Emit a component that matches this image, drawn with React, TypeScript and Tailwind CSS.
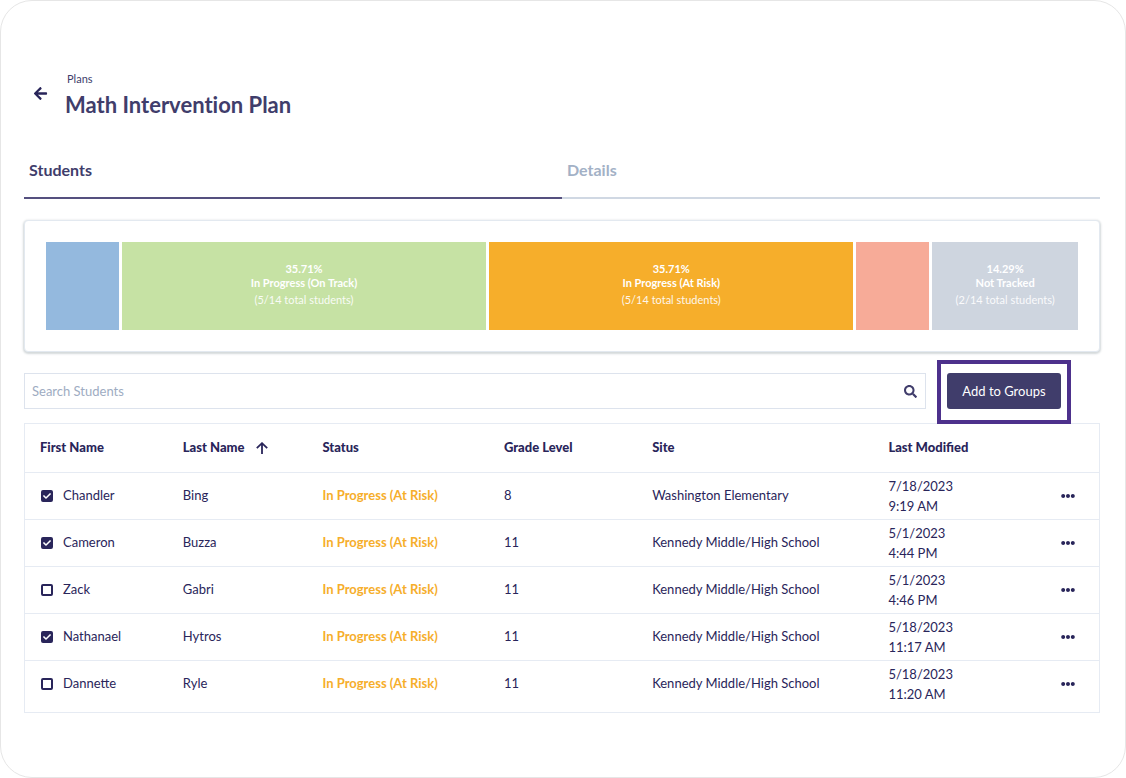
import React, { useState } from 'react';
import { FaArrowLeft, FaSearch, FaEllipsisH, FaCheck } from 'react-icons/fa';

interface Student {
  id: number;
  firstName: string;
  lastName: string;
  status: string;
  grade: string;
  site: string;
  date: string;
  time: string;
}

interface Segment {
  id: string;
  color: string;
  count: number;
  percent?: string;
  label?: string;
}

const TOTAL_STUDENTS = 14;

const segments: Segment[] = [
  { id: 'achieved', color: 'bg-[#94b9de]', count: 1 },
  { id: 'on-track', color: 'bg-[#c6e2a4]', count: 5, percent: '35.71%', label: 'In Progress (On Track)' },
  { id: 'at-risk', color: 'bg-[#f6ae2b]', count: 5, percent: '35.71%', label: 'In Progress (At Risk)' },
  { id: 'not-achieved', color: 'bg-[#f7ab98]', count: 1 },
  { id: 'not-tracked', color: 'bg-[#ced5df]', count: 2, percent: '14.29%', label: 'Not Tracked' },
];

const students: Student[] = [
  { id: 1, firstName: 'Chandler', lastName: 'Bing', status: 'In Progress (At Risk)', grade: '8', site: 'Washington Elementary', date: '7/18/2023', time: '9:19 AM' },
  { id: 2, firstName: 'Cameron', lastName: 'Buzza', status: 'In Progress (At Risk)', grade: '11', site: 'Kennedy Middle/High School', date: '5/1/2023', time: '4:44 PM' },
  { id: 3, firstName: 'Zack', lastName: 'Gabri', status: 'In Progress (At Risk)', grade: '11', site: 'Kennedy Middle/High School', date: '5/1/2023', time: '4:46 PM' },
  { id: 4, firstName: 'Nathanael', lastName: 'Hytros', status: 'In Progress (At Risk)', grade: '11', site: 'Kennedy Middle/High School', date: '5/18/2023', time: '11:17 AM' },
  { id: 5, firstName: 'Dannette', lastName: 'Ryle', status: 'In Progress (At Risk)', grade: '11', site: 'Kennedy Middle/High School', date: '5/18/2023', time: '11:20 AM' },
];

const ProgressBar: React.FC = () => (
  <div className="mt-[21px] flex gap-[3px] rounded border border-[#e3e9f0] bg-white p-[21px] shadow-[0_1px_2px_1px_rgba(60,80,90,0.22)]">
    {segments.map((segment) => (
      <div
        key={segment.id}
        className={`flex h-[88px] min-w-0 basis-0 flex-col items-center justify-center pb-1 text-center text-[11px] leading-[14px] text-white ${segment.color}`}
        style={{ flexGrow: segment.count }}
      >
        {segment.label && (
          <>
            <p className="font-bold">{segment.percent}</p>
            <p className="font-bold">{segment.label}</p>
            <p className="mt-[3px] opacity-90">
              ({segment.count}/{TOTAL_STUDENTS} total students)
            </p>
          </>
        )}
      </div>
    ))}
  </div>
);

const SortArrow: React.FC = () => (
  <svg className="h-3 w-3" viewBox="0 0 12 12" fill="none" stroke="currentColor" strokeWidth="1.8">
    <path d="M6 12V1.2M0.8 6.2L6 1.2l5.2 5" />
  </svg>
);

interface StudentRowProps {
  student: Student;
  checked: boolean;
  onToggle: (id: number) => void;
}

const StudentRow: React.FC<StudentRowProps> = ({ student, checked, onToggle }) => (
  <tr className="border-t border-[#e6ebf3]">
    <td className="pl-4">
      <label className="flex items-center gap-[10px]">
        <span className="relative flex h-3 w-3">
          <input
            type="checkbox"
            checked={checked}
            onChange={() => onToggle(student.id)}
            className="h-3 w-3 appearance-none rounded-[2px] border-2 border-[#29255a] checked:bg-[#29255a]"
          />
          {checked && <FaCheck className="pointer-events-none absolute inset-0 m-auto h-2 w-2 text-white" />}
        </span>
        {student.firstName}
      </label>
    </td>
    <td className="pl-[15px]">{student.lastName}</td>
    <td className="pl-[15px] font-bold text-[#f6ae2b]">{student.status}</td>
    <td className="pl-[15px]">{student.grade}</td>
    <td className="pl-[15px]">{student.site}</td>
    <td className="py-[3px] pl-[15px] leading-5">
      {student.date}
      <br />
      {student.time}
    </td>
    <td className="pl-4">
      <button type="button" aria-label="More options" className="block">
        <FaEllipsisH className="h-[14px] w-[14px]" />
      </button>
    </td>
  </tr>
);

const App: React.FC = () => {
  const [selected, setSelected] = useState<number[]>([1, 2, 4]);
  const [search, setSearch] = useState('');

  const toggleStudent = (id: number) => {
    setSelected((prev) => (prev.includes(id) ? prev.filter((s) => s !== id) : [...prev, id]));
  };

  const visible = students.filter((s) =>
    `${s.firstName} ${s.lastName}`.toLowerCase().includes(search.toLowerCase())
  );

  return (
    <main className="min-h-screen rounded-[32px] border border-[#e6e6e6] bg-white pt-[70px] pr-[25px] pb-16 pl-[23px] font-['Lato',sans-serif] text-[#29255a]">
      {/* Page header */}
      <header className="flex gap-[17px] pl-[9px]">
        <a href="#plans" aria-label="Back to plans" className="mt-[15px] h-[15px]">
          <FaArrowLeft className="h-[15px] w-[15px]" />
        </a>
        <div className="text-[#403d6b]">
          <p className="pl-[2px] text-[11px] leading-4">Plans</p>
          <h1 className="mt-1 text-[22px] leading-7 font-bold [font-variant-ligatures:none]">
            Math Intervention Plan
          </h1>
        </div>
      </header>

      {/* Tabs */}
      <nav className="mt-[39px] flex text-base leading-6 font-bold">
        <a href="#students" className="flex-1 border-b-2 border-[#55507f] pb-[15px] pl-[5px] text-[#403d6b]">
          Students
        </a>
        <a href="#details" className="flex-1 border-b-2 border-[#d0d8e3] pb-[15px] pl-[5px] text-[#a3b1c6]">
          Details
        </a>
      </nav>

      <ProgressBar />

      {/* Search and actions */}
      <div className="relative mt-2 flex items-start gap-[11px] pr-[29px]">
        <div className="mt-[13px] flex h-9 flex-1 items-center border border-[#dde3ed] pr-2">
          <input
            type="search"
            aria-label="Search Students"
            placeholder="Search Students"
            value={search}
            onChange={(e) => setSearch(e.target.value)}
            className="h-full flex-1 px-[7px] text-[13px] outline-none placeholder:text-[#9eacc2]"
          />
          <button type="button" aria-label="Search">
            <FaSearch className="h-[13px] w-[13px] text-[#403d6b]" />
          </button>
        </div>
        <div className="border-4 border-[#4d318c] px-[6px] pt-[9px] pb-[11px]">
          <button type="button" className="block h-9 w-[114px] rounded-[3px] bg-[#403d6b] pt-px text-[13px] text-white">
            Add to Groups
          </button>
        </div>
      </div>

      {/* Students table */}
      <div className="-mt-px border border-[#e6ebf3] pb-[5px]">
        <table className="w-full table-fixed text-left text-[13px]">
          <thead>
            <tr className="h-12 [&>th]:font-black">
              <th className="w-[13.3%] pl-[15px]">First Name</th>
              <th className="w-[13%] pl-[15px]">
                <span className="flex items-center gap-[11px]">
                  Last Name
                  <SortArrow />
                </span>
              </th>
              <th className="w-[16.9%] pl-[15px]">Status</th>
              <th className="w-[13.8%] pl-[15px]">Grade Level</th>
              <th className="w-[22%] pl-[15px]">Site</th>
              <th className="w-[16%] pl-[15px]">Last Modified</th>
              <th aria-label="Actions" />
            </tr>
          </thead>
          <tbody>
            {visible.map((student) => (
              <StudentRow
                key={student.id}
                student={student}
                checked={selected.includes(student.id)}
                onToggle={toggleStudent}
              />
            ))}
          </tbody>
        </table>
      </div>
    </main>
  );
};

export default App;
